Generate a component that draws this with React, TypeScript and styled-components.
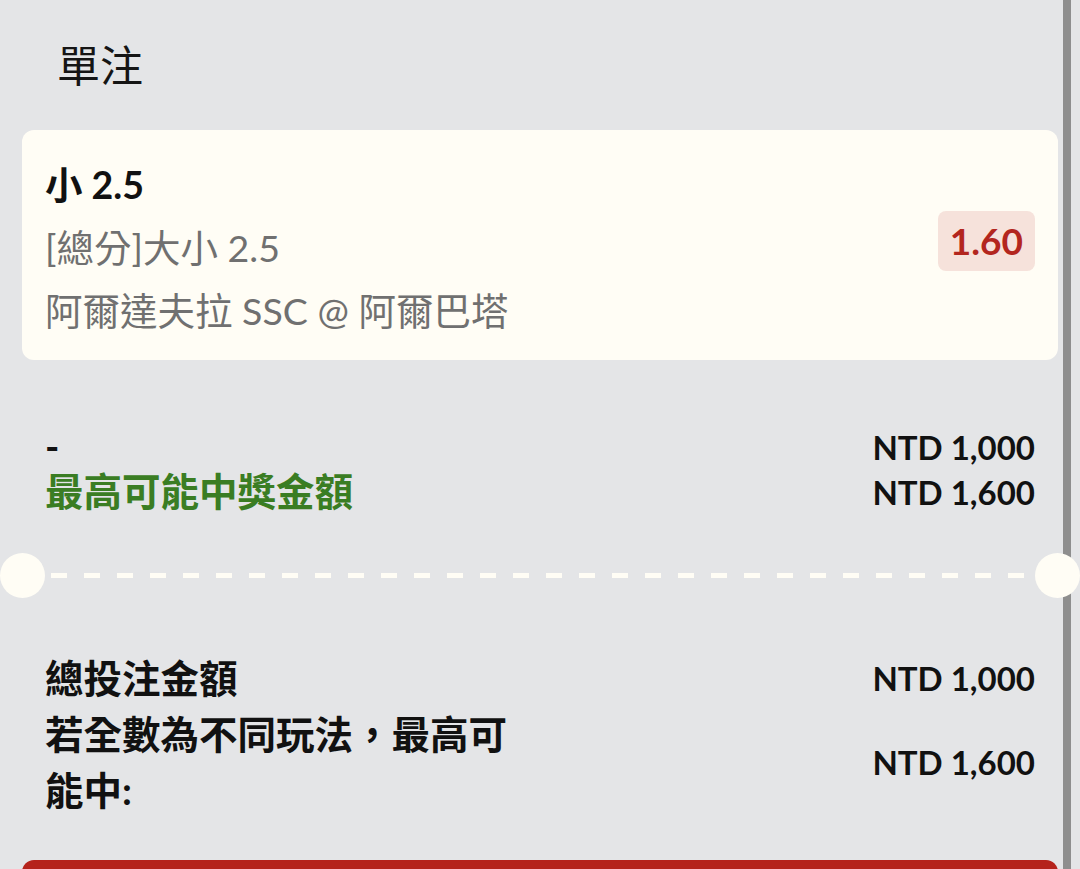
import styled, { createGlobalStyle } from "styled-components";

const GlobalStyle = createGlobalStyle`
  html, body {
    margin: 0;
    padding: 0;
    height: 869px;
    overflow: hidden;
    background: #e4e5e7;
  }
  * {
    box-sizing: border-box;
  }
`;

const FONT = `"Lato", "Noto Sans CJK TC", sans-serif`;
const CREAM = "#fffdf5";

const Page = styled.div`
  position: relative;
  width: 1080px;
  height: 869px;
  overflow: hidden;
  background: #e4e5e7;
  font-family: ${FONT};
  color: #111;
  display: flex;
  flex-direction: column;
  & > * {
    flex-shrink: 0;
  }
`;

const ScrollBar = styled.div`
  position: absolute;
  top: 0;
  bottom: 0;
  right: 9px;
  width: 8px;
  background: #8e8e8e;
  z-index: 1;
`;

const Header = styled.div`
  height: 130px;
  display: flex;
  align-items: center;
  padding-left: 57px;
  padding-bottom: 4px;
  font-size: 43px;
  font-weight: 400;
  color: #151515;
`;

const BetCard = styled.div`
  margin: 0 22px;
  height: 230px;
  background: ${CREAM};
  border-radius: 12px;
  padding: 23px 23px 16px 23px;
  display: flex;
  align-items: center;
  justify-content: space-between;
`;

const BetInfo = styled.div`
  display: flex;
  flex-direction: column;
  align-self: flex-start;
`;

const BetLine = styled.div<{ $strong?: boolean }>`
  font-size: 37.5px;
  line-height: 63px;
  font-weight: ${({ $strong }) => ($strong ? 700 : 400)};
  color: ${({ $strong }) => ($strong ? "#111" : "#707070")};
  white-space: nowrap;
`;

const OddsBadge = styled.div`
  height: 60px;
  padding: 0 12px;
  margin-top: -16px;
  display: flex;
  align-items: center;
  background: #f6e2db;
  border-radius: 8px;
  color: #b3261e;
  font-size: 37px;
  font-weight: 700;
`;

const Summary = styled.div<{ $rowHeight: number }>`
  display: grid;
  grid-template-columns: 480px 1fr;
  grid-auto-rows: minmax(${({ $rowHeight }) => $rowHeight}px, auto);
  padding: 0 45px;
  align-items: center;
`;

const Label = styled.div<{ $tone?: "green" | "black"; $lh: number }>`
  font-size: 38.5px;
  line-height: ${({ $lh }) => $lh}px;
  font-weight: 700;
  color: ${({ $tone }) => ($tone === "green" ? "#3a7d23" : "#111")};
`;

const Amount = styled.div`
  justify-self: end;
  font-size: 33px;
  font-weight: 700;
  color: #111;
  white-space: nowrap;
`;

const Divider = styled.div`
  position: relative;
  z-index: 2;
  height: 45px;
  display: flex;
  align-items: center;
  margin: 39px 0 52px;
`;

const Hole = styled.div`
  width: 45px;
  height: 45px;
  border-radius: 50%;
  background: ${CREAM};
  flex: none;
`;

const Dashes = styled.div`
  flex: 1;
  height: 5px;
  margin: 0 6px;
  background-image: repeating-linear-gradient(
    to right,
    ${CREAM} 0 16px,
    transparent 16px 33px
  );
`;

const Spacer = styled.div<{ $h: number }>`
  height: ${({ $h }) => $h}px;
`;

const SubmitButton = styled.div`
  margin: 42px 22px 0;
  height: 80px;
  border-radius: 12px;
  background: #b5231c;
`;

export default function App() {
  return (
    <>
      <GlobalStyle />
      <Page>
        <ScrollBar />
        <Header>單注</Header>
        <BetCard>
          <BetInfo>
            <BetLine $strong>小 2.5</BetLine>
            <BetLine>[總分]大小 2.5</BetLine>
            <BetLine>阿爾達夫拉 SSC @ 阿爾巴塔</BetLine>
          </BetInfo>
          <OddsBadge>1.60</OddsBadge>
        </BetCard>
        <Spacer $h={64} />
        <Summary $rowHeight={45}>
          <Label $lh={45}>-</Label>
          <Amount>NTD 1,000</Amount>
          <Label $lh={45} $tone="green">
            最高可能中獎金額
          </Label>
          <Amount>NTD 1,600</Amount>
        </Summary>
        <Divider>
          <Hole />
          <Dashes />
          <Hole />
        </Divider>
        <Summary $rowHeight={56}>
          <Label $lh={56}>總投注金額</Label>
          <Amount>NTD 1,000</Amount>
          <Label $lh={56}>若全數為不同玩法，最高可能中:</Label>
          <Amount>NTD 1,600</Amount>
        </Summary>
        <SubmitButton />
      </Page>
    </>
  );
}
